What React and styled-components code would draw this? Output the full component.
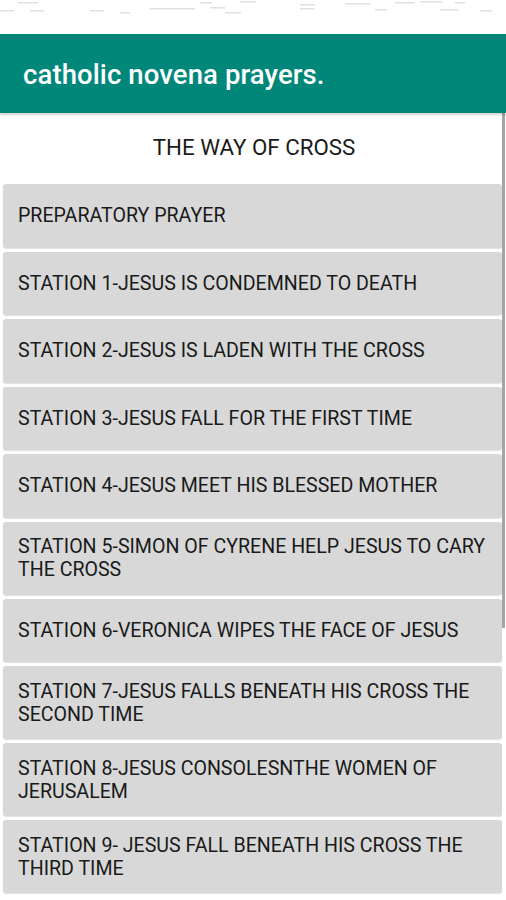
import React from "react";
import styled, { createGlobalStyle } from "styled-components";

const Global = createGlobalStyle`
  html, body { margin: 0; padding: 0; background: #ffffff; }
  body { font-family: Roboto, "Noto Sans", Arial, sans-serif; }
  * { box-sizing: border-box; }
`;

const Screen = styled.div`
  width: 506px;
  height: 900px;
  overflow: hidden;
  display: flex;
  flex-direction: column;
  background: #ffffff;
`;

const StatusBar = styled.div`
  height: 34px;
  background: #ffffff;
  flex-shrink: 0;
`;

const AppBar = styled.div`
  height: 79px;
  flex-shrink: 0;
  background: #00877a;
  display: flex;
  align-items: center;
  padding-left: 23px;
  padding-top: 2px;
  box-shadow: 0 2px 2px rgba(0, 0, 0, 0.18);
  position: relative;
  z-index: 1;
`;

const Title = styled.h1`
  margin: 0;
  color: #ffffff;
  font-family: Roboto, sans-serif;
  font-weight: 500;
  font-size: 27.5px;
  letter-spacing: 0.1px;
`;

const Content = styled.div`
  position: relative;
  flex: 1;
  display: flex;
  flex-direction: column;
`;

const Header = styled.div`
  height: 67px;
  flex-shrink: 0;
  display: flex;
  align-items: center;
  justify-content: center;
  font-family: Roboto, sans-serif;
  font-size: 22.3px;
  color: #1a1a1a;
  background: #ffffff;
  padding-left: 2px;
`;

const List = styled.div`
  display: flex;
  flex-direction: column;
  gap: 4px;
  padding: 4px 4px 0 3px;
`;

const Item = styled.div`
  min-height: 63.5px;
  display: flex;
  align-items: center;
  padding: 13.5px 10px 13.5px 15px;
  background: #d7d8d7;
  border-radius: 3px;
  box-shadow: 0 1px 1px rgba(0, 0, 0, 0.12);
  font-family: Roboto, sans-serif;
  font-size: 19.6px;
  line-height: 23px;
  color: #1a1a1a;
`;

const ScrollThumb = styled.div`
  position: absolute;
  right: 1px;
  top: 0;
  width: 3px;
  height: 515px;
  background: #a4a4a4;
`;

const items = [
  "PREPARATORY PRAYER",
  "STATION 1-JESUS IS CONDEMNED TO DEATH",
  "STATION 2-JESUS IS LADEN WITH THE CROSS",
  "STATION 3-JESUS FALL FOR THE FIRST TIME",
  "STATION 4-JESUS MEET HIS BLESSED MOTHER",
  "STATION 5-SIMON OF CYRENE HELP JESUS TO CARY THE CROSS",
  "STATION 6-VERONICA WIPES THE FACE OF JESUS",
  "STATION 7-JESUS FALLS BENEATH HIS CROSS THE SECOND TIME",
  "STATION 8-JESUS CONSOLESNTHE WOMEN OF JERUSALEM",
  "STATION 9- JESUS FALL BENEATH HIS CROSS THE THIRD TIME",
];

function StatusDashes() {
  const dashes = [
    [0, 10, 14], [18, 2, 20], [30, 10, 14], [90, 10, 14], [120, 12, 10],
    [150, 8, 45], [210, 7, 15], [225, 12, 16], [300, 4, 15], [300, 8, 14],
    [345, 3, 25], [375, 9, 12], [395, 2, 20], [455, 2, 10], [480, 10, 12],
    [200, 2, 12], [240, 1, 16], [420, 1, 22], [440, 9, 18],
  ];
  return (
    <svg width="506" height="34" viewBox="0 0 506 34">
      {dashes.map(([x, y, w], i) => (
        <rect key={i} x={x} y={y} width={w} height="1.5" fill="#e0e0e0" />
      ))}
    </svg>
  );
}

export default function App() {
  return (
    <>
      <Global />
      <Screen>
        <StatusBar>
          <StatusDashes />
        </StatusBar>
        <AppBar>
          <Title>catholic novena prayers.</Title>
        </AppBar>
        <Content>
          <Header>THE WAY OF CROSS</Header>
          <List>
            {items.map((t) => (
              <Item key={t}>{t}</Item>
            ))}
          </List>
          <ScrollThumb />
        </Content>
      </Screen>
    </>
  );
}
